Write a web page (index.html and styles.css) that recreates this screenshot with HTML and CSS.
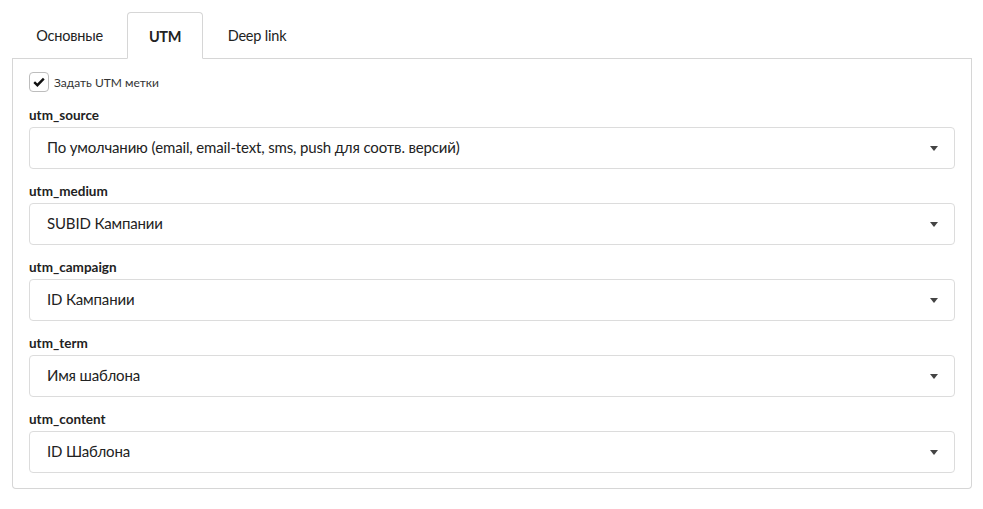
FILE: index.html
```html
<!DOCTYPE html>
<html lang="ru">
<head>
<meta charset="utf-8">
<link rel="stylesheet" href="styles.css">
</head>
<body>
<div class="wrap">
  <div class="tabs">
    <div class="tab tab-main">Основные</div>
    <div class="tab tab-utm active">UTM</div>
    <div class="tab tab-deep">Deep link</div>
    <div class="tab-fill"></div>
  </div>
  <div class="panel">
    <label class="check">
      <span class="box"><svg width="12" height="10" viewBox="0 0 12 10"><path d="M1.2 5.2 L4.4 8.2 L10.8 1.6" fill="none" stroke="#111" stroke-width="2.4"/></svg></span>
      <span class="check-label">Задать UTM метки</span>
    </label>
    <div class="field">
      <div class="label">utm_source</div>
      <div class="select"><span class="value">По умолчанию (email, email-text, sms, push для соотв. версий)</span><i class="caret"></i></div>
    </div>
    <div class="field">
      <div class="label">utm_medium</div>
      <div class="select"><span class="value">SUBID Кампании</span><i class="caret"></i></div>
    </div>
    <div class="field">
      <div class="label">utm_campaign</div>
      <div class="select"><span class="value">ID Кампании</span><i class="caret"></i></div>
    </div>
    <div class="field">
      <div class="label">utm_term</div>
      <div class="select"><span class="value">Имя шаблона</span><i class="caret"></i></div>
    </div>
    <div class="field">
      <div class="label">utm_content</div>
      <div class="select"><span class="value">ID Шаблона</span><i class="caret"></i></div>
    </div>
  </div>
</div>
</body>
</html>
```
FILE: styles.css
```css
* { box-sizing: border-box; }
html, body { margin: 0; padding: 0; background: #fff; }
body {
  font-family: "Lato", "Noto Sans", sans-serif;
  color: #212121;
}
.wrap {
  padding: 12px 11px 0 12px;
}
.tabs {
  display: flex;
  align-items: flex-end;
  height: 47px;
}
.tab {
  height: 47px;
  display: flex;
  align-items: center;
  justify-content: center;
  font-size: 14.5px;
  letter-spacing: -0.2px;
  color: #222;
  border-bottom: 1px solid #d6d6d6;
  padding-top: 1px;
}
.tab-main { width: 115px; }
.tab-utm { width: 76px; }
.tab-deep { width: 108px; }
.tab.active {
  font-weight: bold;
  letter-spacing: -0.4px;
  border: 1px solid #d6d6d6;
  border-bottom-color: #fff;
  border-radius: 4px 4px 0 0;
}
.tab-fill {
  flex: 1;
  height: 47px;
  border-bottom: 1px solid #d6d6d6;
}
.panel {
  border: 1px solid #d6d6d6;
  border-top: none;
  border-radius: 0 0 4px 4px;
  padding: 13px 16px 0 16px;
  height: 430px;
}
.check {
  display: flex;
  align-items: center;
  height: 20px;
  margin-bottom: 15px;
}
.box {
  width: 20px;
  height: 20px;
  border: 1px solid #bdbdbd;
  border-radius: 4px;
  display: flex;
  align-items: center;
  justify-content: center;
  margin-right: 5px;
}
.check-label {
  font-size: 12px;
  color: #333;
}
.field { margin-bottom: 14px; }
.label {
  font-size: 13.5px;
  font-weight: bold;
  line-height: 16px;
  height: 16px;
  margin-bottom: 4px;
  color: #222;
}
.select {
  height: 42px;
  border: 1px solid #dcdcdc;
  border-radius: 4px;
  display: flex;
  align-items: center;
  justify-content: space-between;
  padding: 0 16px 0 17px;
  font-size: 15px;
  letter-spacing: -0.15px;
  color: #222;
}
.value { margin-top: -2px; }
.caret {
  width: 0;
  height: 0;
  border-left: 4.5px solid transparent;
  border-right: 4.5px solid transparent;
  border-top: 5px solid #444;
}
```
